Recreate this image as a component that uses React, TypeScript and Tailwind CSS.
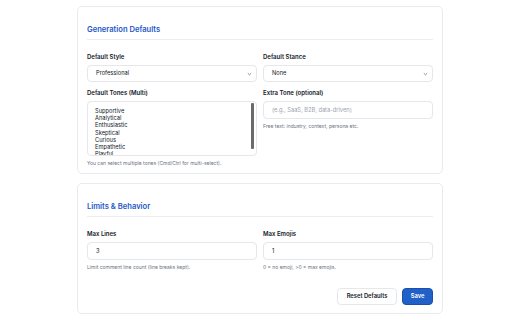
const font = { fontFamily: 'Inter, "Noto Sans", sans-serif' };

const tones = ['Supportive', 'Analytical', 'Enthusiastic', 'Skeptical', 'Curious', 'Empathetic', 'Playful'];

function Chevron() {
  return (
    <svg width="5" height="4" viewBox="0 0 5 4" className="shrink-0">
      <path d="M0.8 1.2 L2.5 2.8 L4.2 1.2" fill="none" stroke="#6b7280" strokeWidth="0.8" />
    </svg>
  );
}

function Label({ children }: { children: React.ReactNode }) {
  return <div className="text-[6px] leading-[8px] font-semibold text-[#111827] mb-[4px]">{children}</div>;
}

function Help({ children }: { children: React.ReactNode }) {
  return <div className="text-[5px] leading-[7px] text-[#6b7280] mt-[4px]">{children}</div>;
}

function SelectBox({ value }: { value: string }) {
  return (
    <div className="h-[17px] rounded-[4px] border border-[#e5e7eb] bg-white flex items-center justify-between pl-[8px] pr-[4px]">
      <span className="text-[5.7px] text-[#111827]">{value}</span>
      <Chevron />
    </div>
  );
}

function InputBox({ value, placeholder }: { value?: string; placeholder?: string }) {
  return (
    <div className="h-[18px] rounded-[4px] border border-[#e5e7eb] bg-white flex items-center pl-[8px]">
      {value ? (
        <span className="text-[5.7px] text-[#111827]">{value}</span>
      ) : (
        <span className="text-[5.7px] text-[#9ca3af]">{placeholder}</span>
      )}
    </div>
  );
}

function CardTitle({ children }: { children: React.ReactNode }) {
  return (
    <div className="pb-[4px] border-b border-[#eceef1] mb-[13px]">
      <h2 className="text-[7.6px] leading-[10px] font-semibold text-[#1e58c9]">{children}</h2>
    </div>
  );
}

export default function App() {
  return (
    <div className="w-[512px] h-[320px] bg-white overflow-hidden pt-[6px] pl-[77px]" style={font}>
      {/* Generation Defaults */}
      <div className="w-[366px] h-[168px] rounded-[5px] border border-[#e9ebee] px-[9px] pt-[18px]">
        <CardTitle>Generation Defaults</CardTitle>
        <div className="grid grid-cols-2 gap-x-[6px]">
          <div>
            <Label>Default Style</Label>
            <SelectBox value="Professional" />
          </div>
          <div>
            <Label>Default Stance</Label>
            <SelectBox value="None" />
          </div>
          <div className="mt-[7px]">
            <Label>Default Tones (Multi)</Label>
            <div className="h-[55px] rounded-[4px] border border-[#e5e7eb] bg-white flex overflow-hidden">
              <div className="flex-1 pl-[7px] pt-[5px] text-[5.7px] leading-[7.2px] text-[#111827]">
                {tones.map((t) => (
                  <div key={t}>{t}</div>
                ))}
              </div>
              <div className="w-[3px] mr-[2px] mt-[1px] h-[46px] bg-[#6b6b6b] rounded-[1px]" />
            </div>
            <Help>You can select multiple tones (Cmd/Ctrl for multi-select).</Help>
          </div>
          <div className="mt-[7px]">
            <Label>Extra Tone (optional)</Label>
            <InputBox placeholder="(e.g., SaaS, B2B, data-driven)" />
            <Help>Free text: industry, context, persona etc.</Help>
          </div>
        </div>
      </div>

      {/* Limits & Behavior */}
      <div className="mt-[9px] w-[366px] h-[131px] rounded-[5px] border border-[#e9ebee] px-[9px] pt-[18px]">
        <CardTitle>Limits &amp; Behavior</CardTitle>
        <div className="grid grid-cols-2 gap-x-[6px]">
          <div>
            <Label>Max Lines</Label>
            <InputBox value="3" />
            <Help>Limit comment line count (line breaks kept).</Help>
          </div>
          <div>
            <Label>Max Emojis</Label>
            <InputBox value="1" />
            <Help>0 = no emoji, &gt;0 = max emojis.</Help>
          </div>
        </div>
        <div className="flex justify-end gap-[5px] mt-[17px]">
          <button className="h-[17px] w-[60px] rounded-[4px] border border-[#e5e7eb] bg-white text-[5.8px] font-semibold text-[#111827]">
            Reset Defaults
          </button>
          <button className="h-[17px] w-[31px] rounded-[4px] border border-[#1a4fae] bg-[#2160c6] text-[5.8px] font-semibold text-white">
            Save
          </button>
        </div>
      </div>
    </div>
  );
}
